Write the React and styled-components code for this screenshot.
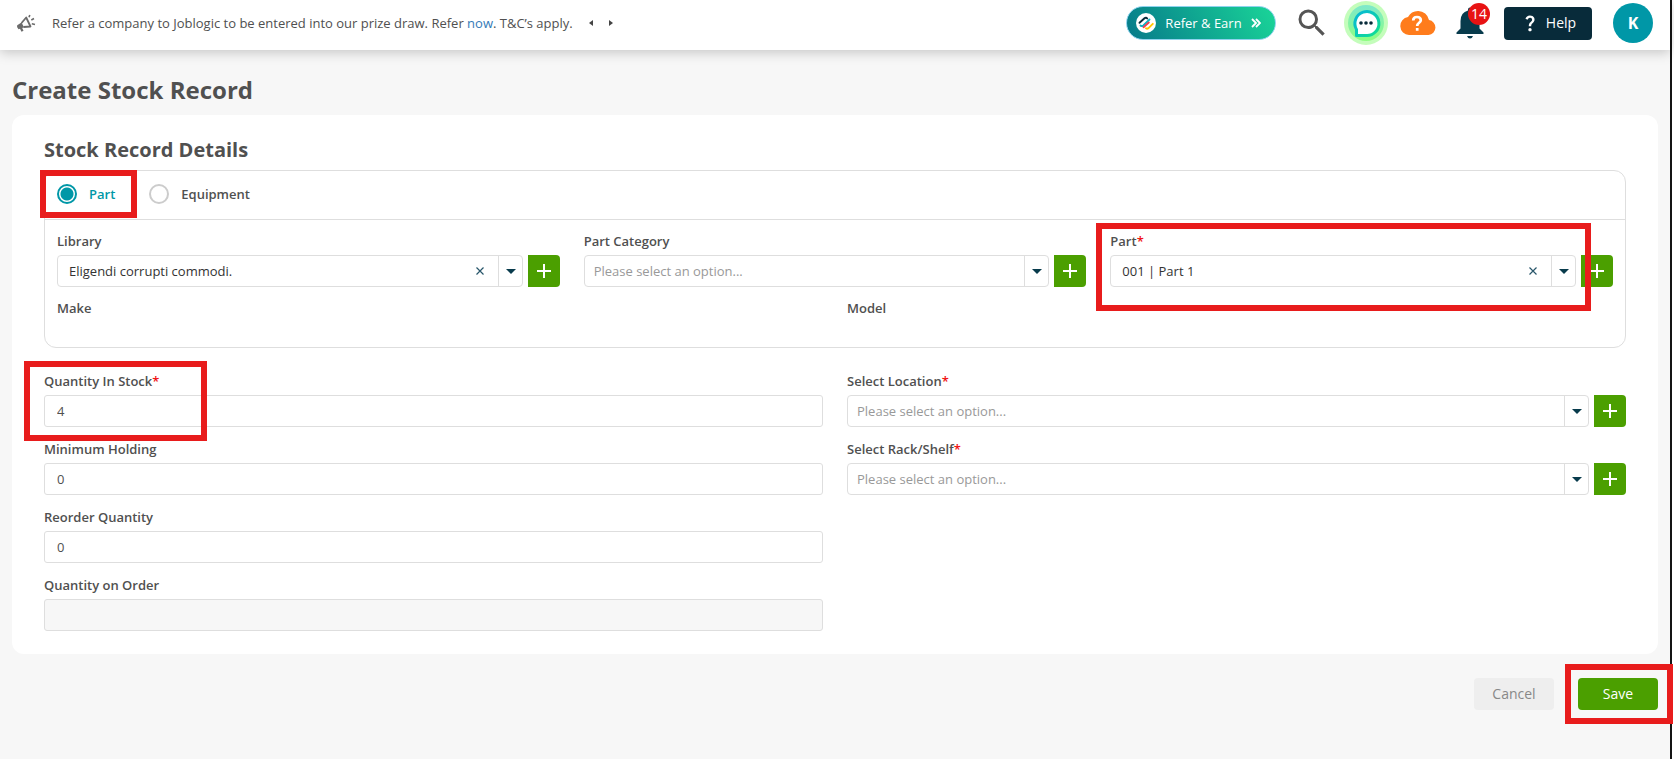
import React, { useState } from "react";
import styled, { createGlobalStyle } from "styled-components";
import { MdSearch, MdQuestionMark } from "react-icons/md";

const GlobalStyle = createGlobalStyle`
  * { box-sizing: border-box; }
  body {
    margin: 0;
    background: #fff;
    font: 400 13px/20px "Open Sans", "Liberation Sans", sans-serif;
    color: #505050;
  }
  button, input, select { font: inherit; color: inherit; margin: 0; }
  button { cursor: pointer; }
`;

const Page = styled.div`
  min-height: 100vh;
  margin-right: 2px;
  border-right: 2px solid #141414;
  background: #f7f7f7;
`;

const Header = styled.header`
  height: 50px;
  padding: 0 17px 0 16px;
  display: flex;
  align-items: center;
  justify-content: space-between;
  background: #fff;
  box-shadow: 0 2px 12px rgba(0, 0, 0, 0.22);
`;

const News = styled.div`
  display: flex;
  align-items: center;
  height: 46px;
  align-self: flex-start;
  p { margin: 0 8px 0 16px; }
  a { color: #337ab7; text-decoration: none; }
`;

const PagerButton = styled.button`
  width: 20px;
  height: 20px;
  padding: 0;
  border: 0;
  background: none;
  display: grid;
  place-items: center;
`;

const Tools = styled.div`
  display: flex;
  align-items: center;
  align-self: flex-start;
  height: 46px;
`;

const ReferButton = styled.button`
  height: 34px;
  width: 150px;
  padding: 0 14px 0 9px;
  border: 1px solid #8fd3ee;
  border-radius: 17px;
  background: linear-gradient(60deg, #067a8a, #1ad598);
  color: #fff;
  font-weight: 500;
  display: flex;
  align-items: center;
  justify-content: space-between;
  white-space: nowrap;
`;

const IconButton = styled.button`
  position: relative;
  width: ${(p) => p.$width}px;
  height: 44px;
  padding: 0;
  border: 0;
  background: none;
  display: grid;
  place-items: center;
  margin-left: ${(p) => p.$gap}px;
  color: ${(p) => p.$color};
`;

const Badge = styled.span`
  position: absolute;
  top: 2px;
  right: -6px;
  width: 22px;
  height: 22px;
  border-radius: 50%;
  background: #e81313;
  color: #fff;
  font-size: 14px;
  font-weight: 500;
  line-height: 22px;
  text-align: center;
`;

const HelpButton = styled.button`
  margin-left: 20px;
  width: 88px;
  height: 33px;
  padding: 0;
  border: 0;
  border-radius: 4px;
  background: #082b3a;
  color: #fff;
  font-size: 14px;
  display: flex;
  align-items: center;
  justify-content: center;
  gap: 6px;
`;

const Avatar = styled.button`
  margin-left: 21px;
  width: 40px;
  height: 40px;
  padding: 0;
  border: 0;
  border-radius: 50%;
  background: #0097a7;
  color: #fff;
  font-size: 16px;
  font-weight: 700;
`;

const Main = styled.main`
  padding: 24px 12px;
`;

const PageTitle = styled.h1`
  margin: 0 0 9px;
  font-size: 24px;
  line-height: 32px;
  font-weight: 700;
`;

const Card = styled.section`
  padding: 20px 32px 23px;
  border-radius: 12px;
  background: #fff;
`;

const SectionTitle = styled.h2`
  margin: 0 0 5px;
  font-size: 20px;
  line-height: 30px;
  font-weight: 700;
`;

const Group = styled.div`
  margin-bottom: 23px;
  border: 1px solid #dedede;
  border-radius: 12px;
`;

const RadioBar = styled.div`
  display: flex;
  gap: 34px;
  height: 49px;
  padding: 0 12px 2px;
  align-items: center;
  border-bottom: 1px solid #dedede;
`;

const RadioLabel = styled.label`
  position: relative;
  display: flex;
  align-items: center;
  gap: 12px;
  font-weight: 600;
  color: ${(p) => (p.$on ? "#0097a7" : "#505050")};
`;

const Radio = styled.input`
  appearance: none;
  width: 20px;
  height: 20px;
  margin: 0;
  border: 2px solid #ccc;
  border-radius: 50%;
  &:checked {
    border-color: #0097a7;
    background: radial-gradient(circle, #0097a7 6px, #fff 7px);
  }
`;

const GroupBody = styled.div`
  padding: 11px 12px 25px;
`;

const Columns = styled.div`
  display: grid;
  grid-template-columns: repeat(${(p) => p.$count}, minmax(0, 1fr));
  column-gap: 24px;
`;

const Stack = styled.div`
  display: flex;
  flex-direction: column;
  gap: 12px;
`;

const FieldBox = styled.div`
  position: relative;
`;

const Label = styled.label`
  display: block;
  height: 24px;
  line-height: 20px;
  font-weight: 600;
  span { color: #f01414; }
`;

const ReadOnlyLabel = styled(Label).attrs({ as: "div" })`
  margin-top: 11px;
`;

const TextInput = styled.input`
  display: block;
  width: 100%;
  height: 32px;
  padding: 0 12px;
  border: 1px solid #dedede;
  border-radius: 3px;
  background: #fff;
  outline: none;
  &:disabled { background: #f7f7f7; }
`;

const PickerRow = styled.div`
  display: flex;
  gap: 5px;
`;

const Picker = styled.div`
  flex: 1;
  min-width: 0;
  display: grid;
  grid-template-columns: 1fr 36px 25px;
  align-items: center;
`;

const Select = styled.select`
  grid-area: 1 / 1 / 2 / 4;
  appearance: none;
  width: 100%;
  height: 32px;
  padding: 0 62px 0 ${(p) => (p.$filled ? 11 : 9)}px;
  border: 1px solid #dedede;
  border-radius: 4px;
  background: #fff;
  color: ${(p) => (p.$filled ? "#333" : "#999")};
  outline: none;
`;

const ClearButton = styled.button`
  grid-area: 1 / 2;
  justify-self: center;
  width: 20px;
  height: 20px;
  padding: 0;
  border: 0;
  background: none;
  display: grid;
  place-items: center;
`;

const Arrow = styled.span`
  grid-area: 1 / 3;
  height: 32px;
  display: grid;
  place-items: center;
  border-left: 1px solid #dedede;
  pointer-events: none;
`;

const AddButton = styled.button`
  width: 32px;
  height: 32px;
  padding: 0;
  border: 0;
  border-radius: 0 4px 4px 0;
  background: #4b9f00;
  display: grid;
  place-items: center;
`;

const Footer = styled.div`
  display: flex;
  justify-content: flex-end;
  gap: 24px;
  padding-top: 24px;
`;

const ActionSlot = styled.div`
  position: relative;
`;

const ActionButton = styled.button`
  width: 80px;
  height: 32px;
  padding: 0;
  border: 0;
  border-radius: 4px;
  font-size: 14px;
  background: ${(p) => (p.$primary ? "#4b9f00" : "#eee")};
  color: ${(p) => (p.$primary ? "#fff" : "#888")};
  font-weight: ${(p) => (p.$primary ? 500 : 400)};
`;

const Highlight = styled.span`
  position: absolute;
  z-index: 1;
  inset: ${(p) => p.$inset};
  width: ${(p) => p.$width || "auto"};
  border: 6px solid #e81c1c;
  pointer-events: none;
`;

const PlusIcon = () => (
  <svg width="16" height="16" viewBox="0 0 16 16" aria-hidden="true">
    <path d="M8 1v14M1 8h14" stroke="#fff" strokeWidth="2" />
  </svg>
);

function PickerField({ id, label, required, value, children }) {
  const [current, setCurrent] = useState(value || "");
  return (
    <FieldBox>
      <Label htmlFor={id}>{label}{required && <span>*</span>}</Label>
      <PickerRow>
        <Picker>
          <Select id={id} value={current} $filled={!!current} onChange={(e) => setCurrent(e.target.value)}>
            <option value="">Please select an option...</option>
            {value && <option value={value}>{value}</option>}
          </Select>
          {current && (
            <ClearButton type="button" aria-label={`Clear ${label}`} onClick={() => setCurrent("")}>
              <svg width="8" height="8" viewBox="0 0 8 8"><path d="M.5.5l7 7M7.5.5l-7 7" stroke="#28566a" strokeWidth="1.2" /></svg>
            </ClearButton>
          )}
          <Arrow>
            <svg width="10" height="5" viewBox="0 0 10 5"><path d="M0 0h10L5 5z" fill="#083b4c" /></svg>
          </Arrow>
        </Picker>
        <AddButton type="button" aria-label={`Add ${label}`}><PlusIcon /></AddButton>
      </PickerRow>
      {children}
    </FieldBox>
  );
}

function NumberField({ id, label, required, value, disabled, children }) {
  return (
    <FieldBox>
      <Label htmlFor={id}>{label}{required && <span>*</span>}</Label>
      <TextInput id={id} defaultValue={value} disabled={disabled} />
      {children}
    </FieldBox>
  );
}

function MegaphoneIcon() {
  return (
    <svg width="20" height="20" viewBox="0 0 20 20" aria-hidden="true">
      <path d="M1.200 12.200L5.500 9.500 8 14.200l-1.800.9 1.300 2.700-2 .9-1.500-3-1.500.6q-2.300-1.800-1.300-4.100z" fill="#6b6b6b" />
      <path d="M5.500 10L10.200 4.500l4.300 9L7.500 14" fill="none" stroke="#6b6b6b" strokeWidth="1.800" strokeLinejoin="round" />
      <path d="M13 4.300l.8-2.300M15.300 7l2.700-1.500M15.800 10.800l3.200.7" stroke="#6b6b6b" strokeWidth="1.600" />
    </svg>
  );
}

function ReferLogo() {
  return (
    <svg width="20" height="20" viewBox="0 0 20 20" aria-hidden="true">
      <circle cx="10" cy="10" r="10" fill="#fff" />
      <g fill="none" strokeWidth="1.900" strokeLinecap="round" strokeLinejoin="round">
        <path d="M3.500 9.800L8.500 5.300q1.500-1.300 2.700.2" stroke="#082b3a" />
        <path d="M4.500 12.500q1.300 1.200 2.800 0L13.500 6.500" stroke="#0cb4c4" />
        <path d="M7.500 14.200L12.800 9.500" stroke="#ef4050" />
        <path d="M10 15.300q1.200.9 2.500-.2L16.800 10.800" stroke="#ffc800" />
      </g>
    </svg>
  );
}

function ChatIcon() {
  return (
    <svg width="44" height="44" viewBox="0 0 44 44" aria-hidden="true">
      <defs>
        <linearGradient id="chatHalo" x1="0" y1="0" x2="0" y2="1">
          <stop offset="0" stopColor="#7fe8cc" /><stop offset="1" stopColor="#8dff80" />
        </linearGradient>
        <linearGradient id="chatRing" x1="0" y1="0" x2="1" y2="1">
          <stop offset="0" stopColor="#06b6d8" /><stop offset="1" stopColor="#10e090" />
        </linearGradient>
      </defs>
      <circle cx="22" cy="22" r="22" fill="#c4fdbb" />
      <circle cx="22" cy="22" r="18" fill="url(#chatHalo)" />
      <path d="M12.500 34.500v-6A12 12 0 1 1 22 34.500z" fill="#fff" stroke="url(#chatRing)" strokeWidth="3" strokeLinejoin="round" />
      <g fill="#082b3a"><circle cx="17" cy="22" r="1.800" /><circle cx="22" cy="22" r="1.800" /><circle cx="27" cy="22" r="1.800" /></g>
    </svg>
  );
}

function CloudIcon() {
  return (
    <svg width="36" height="24" viewBox="0 0 36 24" aria-hidden="true">
      <path d="M29 9.100A11 11 0 0 0 18 0 11.300 11.300 0 0 0 8 6.100 9 9 0 0 0 9 24h19.500a7.500 7.500 0 0 0 .5-14.900z" fill="#ff7c1c" />
      <path d="M13.200 9.500q0-3.500 3.800-3.500t3.800 3.200c0 2.600-3.600 2.700-3.600 5.800M17.200 17v2.800" fill="none" stroke="#fff" strokeWidth="2.700" />
    </svg>
  );
}

function BellIcon() {
  return (
    <svg width="28" height="32" viewBox="0 0 28 32" aria-hidden="true">
      <path d="M12 2.500a2 2 0 0 1 4 0v1q7.500 2 7.500 10.500v7.500l4 4V27H.5v-1.500l4-4V14q0-8.500 7.500-10.500z" fill="#083b4c" />
      <path d="M11 29h6q-1 2.500-3 2.500T11 29z" fill="#083b4c" />
    </svg>
  );
}

export default function App() {
  const [kind, setKind] = useState("part");
  return (
    <>
      <GlobalStyle />
      <Page>
        <Header>
          <News>
            <MegaphoneIcon />
            <p>Refer a company to Joblogic to be entered into our prize draw. Refer <a href="#now">now</a>. T&amp;C’s apply.</p>
            <PagerButton type="button" aria-label="Previous">
              <svg width="4" height="6" viewBox="0 0 4 6"><path d="M4 0v6L0 3z" fill="#444" /></svg>
            </PagerButton>
            <PagerButton type="button" aria-label="Next">
              <svg width="4" height="6" viewBox="0 0 4 6"><path d="M0 0v6l4-3z" fill="#444" /></svg>
            </PagerButton>
          </News>
          <Tools>
            <ReferButton type="button">
              <ReferLogo />
              Refer &amp; Earn
              <svg width="10" height="10" viewBox="0 0 10 10"><path d="M1 1l4 4-4 4M5 1l4 4-4 4" fill="none" stroke="#fff" strokeWidth="1.800" /></svg>
            </ReferButton>
            <IconButton type="button" aria-label="Search" $width={36} $gap={18} $color="#555"><MdSearch size={36} /></IconButton>
            <IconButton type="button" aria-label="Chat" $width={44} $gap={14}><ChatIcon /></IconButton>
            <IconButton type="button" aria-label="Cloud help" $width={36} $gap={12}><CloudIcon /></IconButton>
            <IconButton type="button" aria-label="Notifications" $width={28} $gap={20}>
              <BellIcon />
              <Badge>14</Badge>
            </IconButton>
            <HelpButton type="button"><MdQuestionMark size={20} />Help</HelpButton>
            <Avatar type="button">K</Avatar>
          </Tools>
        </Header>
        <Main>
          <PageTitle>Create Stock Record</PageTitle>
          <Card>
            <SectionTitle>Stock Record Details</SectionTitle>
            <Group>
              <RadioBar>
                <RadioLabel $on={kind === "part"}>
                  <Radio type="radio" name="kind" checked={kind === "part"} onChange={() => setKind("part")} />
                  Part
                  <Highlight $inset="-14px -22px -14px -17px" />
                </RadioLabel>
                <RadioLabel $on={kind === "equipment"}>
                  <Radio type="radio" name="kind" checked={kind === "equipment"} onChange={() => setKind("equipment")} />
                  Equipment
                </RadioLabel>
              </RadioBar>
              <GroupBody>
                <Columns $count={3}>
                  <PickerField id="library" label="Library" value="Eligendi corrupti commodi." />
                  <PickerField id="category" label="Part Category" />
                  <PickerField id="part" label="Part" required value="001 | Part 1">
                    <Highlight $inset="-8px 22px -24px -14px" />
                  </PickerField>
                </Columns>
                <Columns $count={2}>
                  <ReadOnlyLabel>Make</ReadOnlyLabel>
                  <ReadOnlyLabel>Model</ReadOnlyLabel>
                </Columns>
              </GroupBody>
            </Group>
            <Columns $count={2}>
              <Stack>
                <NumberField id="stock" label="Quantity In Stock" required value="4">
                  <Highlight $inset="-10px auto -14px -20px" $width="183px" />
                </NumberField>
                <NumberField id="minimum" label="Minimum Holding" value="0" />
                <NumberField id="reorder" label="Reorder Quantity" value="0" />
                <NumberField id="ordered" label="Quantity on Order" disabled />
              </Stack>
              <Stack>
                <PickerField id="location" label="Select Location" required />
                <PickerField id="rack" label="Select Rack/Shelf" required />
              </Stack>
            </Columns>
          </Card>
          <Footer>
            <ActionButton type="button">Cancel</ActionButton>
            <ActionSlot>
              <ActionButton type="submit" $primary>Save</ActionButton>
              <Highlight $inset="-14px -15px -14px -13px" />
            </ActionSlot>
          </Footer>
        </Main>
      </Page>
    </>
  );
}
